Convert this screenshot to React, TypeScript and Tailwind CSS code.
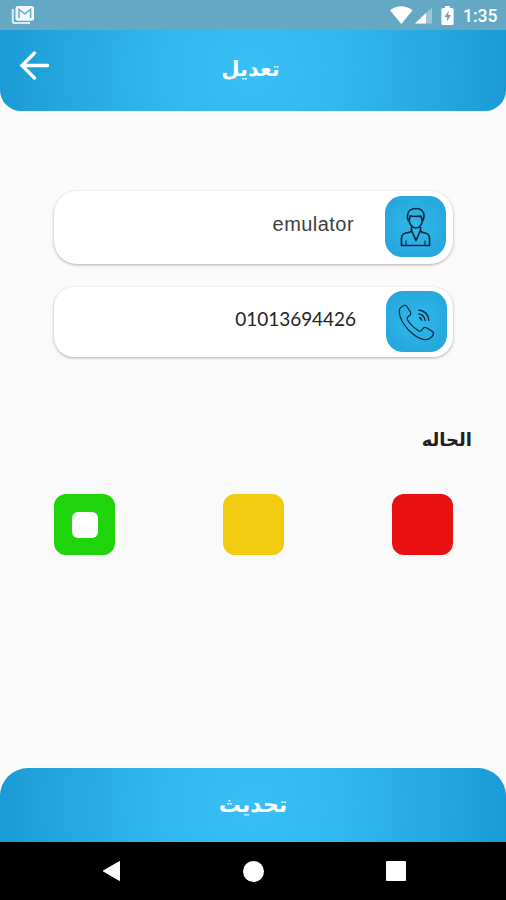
import type { ReactNode } from "react";

const blueBand = "bg-[radial-gradient(circle_at_center,#38bff5_0px,#31b8ef_90px,#27aae2_170px,#1b9bd5_253px)]";
const arabic = "font-['DejaVu_Sans','Noto_Sans',sans-serif] font-bold";

function StatusBar() {
  return (
    <div className="flex h-[30px] items-center justify-between bg-[#65a8c4] pl-[11px] pr-[9px]">
      <svg width="24" height="20" viewBox="0 0 24 20" fill="none">
        <path d="M1.8 4v12.2q0 1.8 1.8 1.8H19" stroke="#dcecf3" strokeWidth="2" />
        <rect x="4.5" y="1" width="18.5" height="14.8" rx="2.5" fill="#f0f8fb" />
        <path d="M8 13V4.4l5.8 4.4 5.8-4.4V13" stroke="#65a8c4" strokeWidth="1.5" />
      </svg>
      <div className="flex items-center">
        <svg width="23" height="18" viewBox="0 0 23 18"><path d="M0 4.3Q11.3-3.7 22.6 4.3L11.3 18Z" fill="white" /></svg>
        <svg className="ml-[1px] mt-[1px]" width="19" height="17" viewBox="0 0 19 17">
          <path d="M1 16.5 18 .5v16Z" fill="#9dc7d9" />
          <path d="M1 16.5 12 6v10.5Z" fill="white" />
        </svg>
        <svg className="ml-[8px]" width="13" height="19" viewBox="0 0 13 19">
          <path d="M4 0h5v2h2q1.6 0 1.6 1.6v13.8q0 1.6-1.6 1.6H2Q.4 19 .4 17.4V3.6Q.4 2 2 2h2Z" fill="white" />
          <path d="M7.8 4.5 3.5 11h2.6v4.4L10 9H7.2Z" fill="#65a8c4" />
        </svg>
        <span className="ml-[9px] mt-[2px] w-[34px] whitespace-nowrap font-[Roboto,sans-serif] text-[17.5px] leading-[20px] font-medium text-white">1:35</span>
      </div>
    </div>
  );
}

function IconTile({ children }: { children: ReactNode }) {
  return (
    <div className="size-[61px] shrink-0 rounded-[17px] bg-[radial-gradient(circle,#30b7ec_0%,#23a3d9_100%)]">
      <svg width="61" height="61" viewBox="0 0 61 61" fill="none" stroke="#092c3b" strokeLinejoin="round">
        {children}
      </svg>
    </div>
  );
}

function Swatch({ className, selected = false }: { className: string; selected?: boolean }) {
  return (
    <div className={"flex size-[61px] items-center justify-center rounded-[12px] " + className}>
      {selected && <div className="size-[26px] rounded-[6px] bg-white" />}
    </div>
  );
}

export default function App() {
  return (
    <div className="flex h-[900px] w-[506px] flex-col overflow-hidden bg-[#fafafa]">
      <StatusBar />
      <header className={"grid h-[81px] grid-cols-[70px_1fr_75px] rounded-b-[21px] " + blueBand}>
        <svg className="ml-[19px] mt-[20px]" width="32" height="31" viewBox="0 0 32 31" fill="none" stroke="white" strokeWidth="3.4" strokeLinecap="round">
          <path d="M28.5 15.5H3M15.5 3 3 15.5 15.5 28" />
        </svg>
        <h1 dir="rtl" className={"mt-[23px] text-center text-[21px] leading-[32px] text-white " + arabic}>
          <span className="inline-block">تعديل</span>
        </h1>
      </header>

      <main className="flex flex-1 flex-col px-[54px] pt-[80px]">
        <div className="-mr-px flex h-[73px] items-start justify-end rounded-[23px] bg-white pr-[7px] pt-[5px] shadow-[0_1px_3px_rgba(0,0,0,0.3)]">
          <span className="mr-[31px] mt-[14px] font-['Liberation_Sans',sans-serif] text-[20px] leading-[28px] tracking-[0.45px] text-[#404040]">emulator</span>
          <IconTile>
            <g strokeWidth="1.7">
              <path d="M23.5 25Q22 22 22.5 19.500C22.500 15 26 12.500 31 12.500S39 15.500 39 20Q39 23 37.500 25" />
              <path d="M23.500 24.500Q25 23.500 25.300 19.800Q27.500 21 36 20.200Q36.500 23.500 38 24.500" />
              <path d="M24 23C24 28 27 32 31 32S37.500 28 37.500 23" />
              <path d="M26.500 31v3.500L31 44.500l4.500-10V31M26.500 35Q25.500 36.500 21 37Q16.500 38 16.500 42.500v7h28v-7Q44.500 38 40 37Q36.500 36.500 35.500 35" />
            </g>
            <path strokeWidth="1" d="M21 44.500v5M40 44.500v5" />
          </IconTile>
        </div>

        <div className="-mr-px mt-[23px] flex h-[70px] items-start justify-end rounded-[20px] bg-white pr-[6px] pt-[4px] shadow-[0_1px_3px_rgba(0,0,0,0.3)]">
          <span className="mr-[30px] mt-[14px] font-[Lato,sans-serif] text-[19px] leading-[28px] tracking-[-0.05px] text-[#242424]">01013694426</span>
          <IconTile>
            <path strokeWidth="1.2" d="M18.500 14.300Q13 16 13.200 21Q14 30 23 39.500Q30 46.500 37 48.300Q42 49.500 45 46.500Q49 43 46.500 40.500L40.500 36.700Q38.500 35.800 37 37.500L35.500 39.500Q34.500 40.800 32.500 39.700Q24.500 34.500 21.300 28.500Q20.500 26.800 22 25.800L24 24.200Q25.500 22.800 24.500 21L20.500 15Q19.700 14 18.500 14.300Z" />
            <path strokeWidth="1.3" d="M32.500 19Q42 20 43 30M32.500 22.800Q38.500 23.500 39.200 30M33 26.500Q35.500 27 35.800 29.800" />
          </IconTile>
        </div>

        <h2 dir="rtl" className={"-mr-[20px] mt-[67px] text-start text-[18px] leading-[32px] text-[#202020] " + arabic}>الحاله</h2>
        <div className="-mr-px mt-[38px] flex justify-between">
          <Swatch className="bg-[#20d40b]" selected />
          <Swatch className="bg-[#f0cb10]" />
          <Swatch className="bg-[#e81010]" />
        </div>
      </main>

      <button className={"h-[74px] rounded-t-[28px] " + blueBand}>
        <span dir="rtl" className={"inline-block text-[22px] leading-[32px] text-white " + arabic}>تحديث</span>
      </button>
      <nav className="flex h-[58px] items-center justify-between bg-black pl-[102px] pr-[100px]">
        <svg width="19" height="22" viewBox="0 0 19 22"><path d="M17.500 1.500v19L1.200 11Z" fill="white" stroke="white" strokeLinejoin="round" /></svg>
        <div className="size-[21px] rounded-full bg-white" />
        <div className="size-[20px] rounded-[1px] bg-white" />
      </nav>
    </div>
  );
}
